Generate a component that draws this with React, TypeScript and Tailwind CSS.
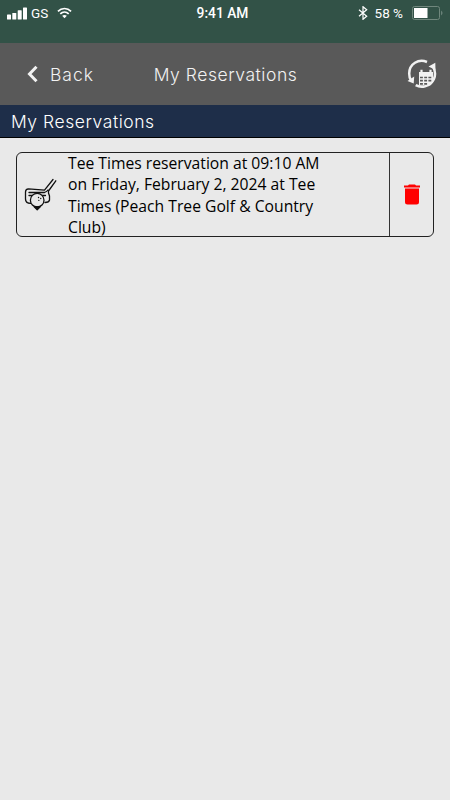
import type { ReactNode } from 'react';

interface Reservation {
  id: number;
  lines: string[];
}

const reservations: Reservation[] = [
  {
    id: 1,
    lines: [
      'Tee Times reservation at 09:10 AM',
      'on Friday, February 2, 2024 at Tee',
      'Times (Peach Tree Golf & Country',
      'Club)',
    ],
  },
];

function StatusBar() {
  return (
    <div className="grid h-[43px] grid-cols-3 bg-[#325247] pt-[5px] font-['Roboto',sans-serif] text-[13.5px] leading-4 text-white">
      <div className="flex h-4 items-center pl-[7px]">
        <svg width="20" height="13" viewBox="0 0 20 13" fill="currentColor">
          <rect x="0" y="7.5" width="4" height="5" rx=".6" />
          <rect x="5.3" y="6" width="4" height="6.5" rx=".6" />
          <rect x="10.7" y="3.2" width="4" height="9.3" rx=".6" />
          <rect x="16" y="0.4" width="4" height="12.1" rx=".6" />
        </svg>
        <span className="ml-[4px] w-[18px]">GS</span>
        <svg className="ml-[8px]" width="15" height="12" viewBox="0 0 16 12" fill="none" stroke="currentColor" strokeWidth="1.8">
          <path d="M1 4.3C5 .2 11 .2 15 4.3" />
          <path d="M3.5 7C6.2 4.3 9.8 4.3 12.5 7" />
          <path d="M8 11.5L5.5 9Q8 7 10.5 9Z" fill="currentColor" stroke="none" />
        </svg>
      </div>
      <div className="pr-[5px] text-center text-[13.8px] font-medium">9:41 AM</div>
      <div className="flex h-4 items-center justify-end pr-[7px]">
        <svg width="10" height="14" viewBox="0 0 10 14" fill="none" stroke="currentColor" strokeWidth="1.2">
          <path d="M1 3.7L8.7 10.2 5 13.3V.7L8.7 3.8 1 10.3" />
        </svg>
        <span className="ml-[7px] whitespace-nowrap">58 %</span>
        <svg className="ml-[9px]" width="31" height="14" viewBox="0 0 31 14">
          <rect x=".5" y=".5" width="27" height="13" rx="2" fill="none" stroke="#70877d" />
          <rect x="2" y="2" width="13.5" height="10" fill="#fff" />
          <path d="M29.3 4.5Q31.5 7 29.3 9.5Z" fill="#83978f" />
        </svg>
      </div>
    </div>
  );
}

function RefreshCalendarIcon() {
  return (
    <svg width="30" height="30" viewBox="0 0 30 30" fill="none" stroke="#f2f2f2">
      <path d="M20 3C11.5-.5 2.3 4.8 2.2 14.5c0 2.6.6 5 1.8 6.7" strokeWidth="2.5" />
      <path d="M26.5 8.5c3.8 8 .2 16.2-8.5 18.9-3.3.9-6.5.4-9.3-1.2" strokeWidth="2.5" />
      <path d="M.5 22l6.2 2.4.5-7zM21.5 7.5l6.8-3.7.2 7.3z" fill="#f2f2f2" stroke="none" />
      <path d="M12 13h14v10.5l-3 3H12z" fill="#f2f2f2" stroke="none" />
      <path d="M14.5 10.8v4M23.5 10.8v4" strokeWidth="2.2" />
      <path d="M13 18.5h2.9M17.2 18.5h2.9M21.4 18.5h2.9M13 21.7h2.9M17.2 21.7h2.9M21.4 21.7h2.9M13 24.9h2.9M17.2 24.9h2.9" stroke="#595959" strokeWidth="1.7" />
    </svg>
  );
}

function NavBar() {
  return (
    <div className="grid h-[62px] grid-cols-3 items-center bg-[#595959] pt-[2px] font-['Inter',sans-serif] text-[17.5px] font-light text-[#f2f2f2]">
      <button className="flex items-center pl-[27px] text-left">
        <svg className="-mt-0.5" width="11" height="18" viewBox="0 0 11 18" fill="none" stroke="currentColor" strokeWidth="3">
          <path d="M9.5 1.8L2.5 9l7 7.2" />
        </svg>
        <span className="ml-[12px] tracking-[1px]">Back</span>
      </button>
      <div className="whitespace-nowrap pl-[1px] text-center tracking-[0.55px]">My Reservations</div>
      <button className="-mt-0.5 mr-[13px] justify-self-end">
        <RefreshCalendarIcon />
      </button>
    </div>
  );
}

function GolfIcon() {
  return (
    <svg width="34" height="34" viewBox="0 0 34 34" fill="none" stroke="#111" strokeWidth="1.3" strokeLinejoin="round" strokeLinecap="round">
      <path d="M29 1.5L20.5 12.2 4.5 10.8Q1.5 11 1.5 14v7q0 3 2.5 4l2.5.3M31.8 2.8L24.5 13v2l1 3v4q-.5 2.5-4.500 2.5" />
      <path d="M5 14.5h15.500q2.500-1 3.500-2.500M5 17.500h4M17.500 17.500h4" />
      <circle cx="13.2" cy="22.2" r="6.8" fill="#e9e9e9" />
      <path d="M10.2 28.8L13.2 31.8l3-3z" fill="#111" />
      <path d="M14.500 19.500h.1M16.700 20.500h.1M14.800 22.300h.1" />
    </svg>
  );
}

function SectionTitle({ children }: { children: ReactNode }) {
  return (
    <h1 className="h-[33px] border-b border-black bg-[#1e2e49] pl-[11px] font-['Inter',sans-serif] text-[17.5px] font-light leading-[34px] tracking-[0.55px] text-white">
      {children}
    </h1>
  );
}

function ReservationCard({ reservation }: { reservation: Reservation }) {
  return (
    <div className="flex h-[85px] rounded-[6px] border border-[#222]">
      <div className="flex w-[51px] items-center pl-[7px]">
        <GolfIcon />
      </div>
      <div className="flex-1 font-['Open_Sans',sans-serif] text-[15.7px] leading-[21.3px] text-black">
        {reservation.lines.map((line) => (
          <div key={line} className="whitespace-nowrap">{line}</div>
        ))}
      </div>
      <button className="flex w-[44px] items-center justify-center border-l border-[#333]">
        <svg width="16" height="21" viewBox="0 0 16 21" fill="#f00">
          <path d="M0 1.5h4L5 .5h6l1 1h4v2H0zM1 4.5h14V18q0 2.5-2.500 2.5h-9Q1 20.5 1 18z" />
        </svg>
      </button>
    </div>
  );
}

export default function App() {
  return (
    <div className="min-h-screen w-full bg-[#e9e9e9]">
      <StatusBar />
      <NavBar />
      <SectionTitle>My Reservations</SectionTitle>
      <div className="px-4 pt-[14px]">
        {reservations.map((r) => (
          <ReservationCard key={r.id} reservation={r} />
        ))}
      </div>
    </div>
  );
}
